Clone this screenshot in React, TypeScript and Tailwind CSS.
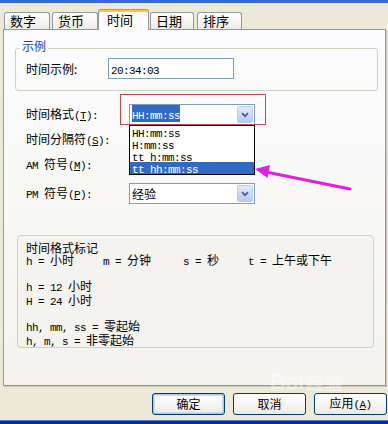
import React from 'react';

// Latin runs are drawn narrow and monospaced, as in the old bitmap UI font
const L = ({ children }: { children: React.ReactNode }) => (
    <span className="font-['Liberation_Mono',monospace] text-[11px] tracking-[-0.6px]">{children}</span>
);

function ArrowBtn() {
    return (
        <div className="flex h-[17px] w-[16px] items-center justify-center rounded-[2px] border border-[#B9CDF5] bg-linear-to-b from-[#E3EBFD] to-[#B4C7F5]">
            <svg width="8" height="6" viewBox="0 0 8 6">
                <path d="M1 1.2 L4 4.2 L7 1.2" fill="none" stroke="#4D6185" strokeWidth="1.8" />
            </svg>
        </div>
    );
}

function Combo({ children }: { children?: React.ReactNode }) {
    return (
        <div className="flex h-[21px] w-[126px] items-center border border-[#7F9DB9] bg-white pl-[2px] pr-px">
            <div className="flex-1 leading-[12px]">{children}</div>
            <ArrowBtn />
        </div>
    );
}

const tabs = [
    { label: '数字', cls: 'w-[46px]' },
    { label: '货币', cls: 'ml-[2px] w-[46px]' },
    { label: '时间', cls: 'w-[51px]', active: true },
    { label: '日期', cls: 'ml-[1px] w-[44px]' },
    { label: '排序', cls: 'ml-[3px] w-[45px]' },
];

const formats = ['HH:mm:ss', 'H:mm:ss', 'tt h:mm:ss', 'tt hh:mm:ss'];

export default function App() {
    return (
        <div className="relative flex h-[424px] w-[388px] flex-col overflow-hidden bg-[#ECE9D8] font-['Noto_Sans_CJK_SC',sans-serif] text-[12px] leading-[14px] text-black">
            {/* window title bar edge */}
            <div className="h-[3px] bg-[#3A6AD4]" />

            {/* Tabs */}
            <div className="mt-[6px] flex h-[20px] items-end pl-[4px]">
                {tabs.map((t) =>
                    t.active ? (
                        <div
                            key={t.label}
                            className={`relative z-10 -mb-px flex h-[21px] items-center rounded-t-[3px] border border-b-0 border-[#919B9C] border-t-[#E68B2C] bg-[#FCFCFE] pl-[8px] text-[13px] shadow-[inset_0_2px_0_#FFC83C] ${t.cls}`}
                        >
                            {t.label}
                        </div>
                    ) : (
                        <div
                            key={t.label}
                            className={`flex h-[17px] items-center rounded-t-[3px] border border-b-0 border-[#919B9C] bg-linear-to-b from-[#FFFFFF] to-[#ECEBE6] pl-[5px] text-[13px] ${t.cls}`}
                        >
                            {t.label}
                        </div>
                    )
                )}
            </div>

            {/* Tab page */}
            <div className="relative ml-[3px] h-[357px] w-[383px] border border-[#919B9C] bg-linear-to-b from-[#FCFCFE] to-[#F4F3EE] shadow-[1px_1px_0_#C9C7BA]">
                {/* 示例 */}
                <div className="relative ml-[11px] mt-[18px] h-[43px] w-[363px] rounded-[3px] border border-[#D0D0BF]">
                    <span className="absolute left-[4px] top-[-10px] bg-[#FBFBFC] px-[2px] text-[#0046D5]">示例</span>
                    <div className="flex items-center pl-[10px] pt-[9px]">
                        <span className="w-[82px]">时间示例:</span>
                        <div className="h-[21px] w-[126px] border border-[#7F9DB9] bg-white pl-[2px] leading-[19px]">
                            <L>20:34:03</L>
                        </div>
                    </div>
                </div>

                {/* Format rows */}
                <div className="mt-[13px] flex flex-col pl-[22px]">
                    <div className="flex h-[21px] items-center">
                        <span className="w-[103px]">
                            时间格式<L>(<u>T</u>):</L>
                        </span>
                        <div className="relative">
                            <Combo>
                                <span className="bg-[#316AC5] text-white">
                                    <L>HH:mm:ss</L>
                                </span>
                            </Combo>
                            {/* highlight frame */}
                            <div className="pointer-events-none absolute left-[-9px] top-[-10px] h-[31px] w-[146px] border-[1.5px] border-[#C9424E]" />
                            {/* open list */}
                            <div className="absolute left-0 top-full z-10 w-[126px] border border-black bg-white">
                                {formats.map((f, i) => (
                                    <div
                                        key={f}
                                        className={`h-[12px] pl-[2px] leading-[12px] ${i === 3 ? 'bg-[#316AC5] text-white' : ''}`}
                                    >
                                        <L>{f}</L>
                                    </div>
                                ))}
                            </div>
                        </div>
                    </div>
                    <div className="mt-[4px] flex h-[21px] items-center">
                        <span className="w-[103px]">
                            时间分隔符<L>(<u>S</u>):</L>
                        </span>
                        <Combo>
                            <L>:</L>
                        </Combo>
                    </div>
                    <div className="mt-[4px] flex h-[21px] items-center">
                        <span className="w-[103px]">
                            <L>AM </L>符号<L>(<u>M</u>):</L>
                        </span>
                        <Combo />
                    </div>
                    <div className="mt-[8px] flex h-[21px] items-center">
                        <span className="w-[103px]">
                            <L>PM </L>符号<L>(<u>P</u>):</L>
                        </span>
                        <Combo>经验</Combo>
                    </div>
                </div>

                {/* 时间格式标记 */}
                <div className="ml-[13px] mt-[31px] h-[113px] w-[357px] rounded-[4px] border border-[#D0D0BF] bg-[#F4F3EF] pl-[8px] pt-[6px] leading-[12px]">
                    <div>时间格式标记</div>
                    <div className="flex">
                        <span className="w-[77px]"><L>h = </L>小时</span>
                        <span className="w-[80px]"><L>m = </L>分钟</span>
                        <span className="w-[65px]"><L>s = </L>秒</span>
                        <span><L>t = </L>上午或下午</span>
                    </div>
                    <div className="h-[12px]" />
                    <div><L>h = 12 </L>小时</div>
                    <div><L>H = 24 </L>小时</div>
                    <div className="h-[12px]" />
                    <div><L>hh, mm, ss = </L>零起始</div>
                    <div><L>h, m, s = </L>非零起始</div>
                </div>
            </div>

            {/* Buttons */}
            <div className="mt-[7px] flex justify-end gap-[8px] pr-px">
                <button className="h-[22px] w-[73px] rounded-[3px] border border-[#003C74] bg-linear-to-b from-[#FFFFFF] to-[#ECEBE6] shadow-[inset_0_0_0_1px_#A9C4F4,inset_0_0_0_2px_#CEDCF9]">
                    确定
                </button>
                <button className="h-[22px] w-[73px] rounded-[3px] border border-[#003C74] bg-linear-to-b from-[#FFFFFF] to-[#ECEBE6]">
                    取消
                </button>
                <button className="h-[22px] w-[73px] rounded-[3px] border border-[#003C74] bg-linear-to-b from-[#FFFFFF] to-[#ECEBE6]">
                    应用<L>(<u>A</u>)</L>
                </button>
            </div>

            <div className="mt-auto h-[4px] border-t border-[#4E78D6] bg-[#0C2C8C]" />

            {/* watermark */}
            <div className="pointer-events-none absolute left-[270px] top-[370px] flex items-end gap-[2px] font-['Liberation_Sans',sans-serif] text-[22px] font-bold leading-[24px] text-white/40">
                <span>Bai</span>
                <span className="font-['Noto_Sans_CJK_SC',sans-serif] text-[18px]">经验</span>
            </div>

            {/* magenta annotation arrow */}
            <svg className="pointer-events-none absolute left-0 top-0" width="388" height="424">
                <line x1="350" y1="189" x2="266" y2="172" stroke="#E01FE0" strokeWidth="3" strokeLinecap="round" />
                <polygon points="255,169 270,165 267.5,178" fill="#E01FE0" />
            </svg>
        </div>
    );
}
